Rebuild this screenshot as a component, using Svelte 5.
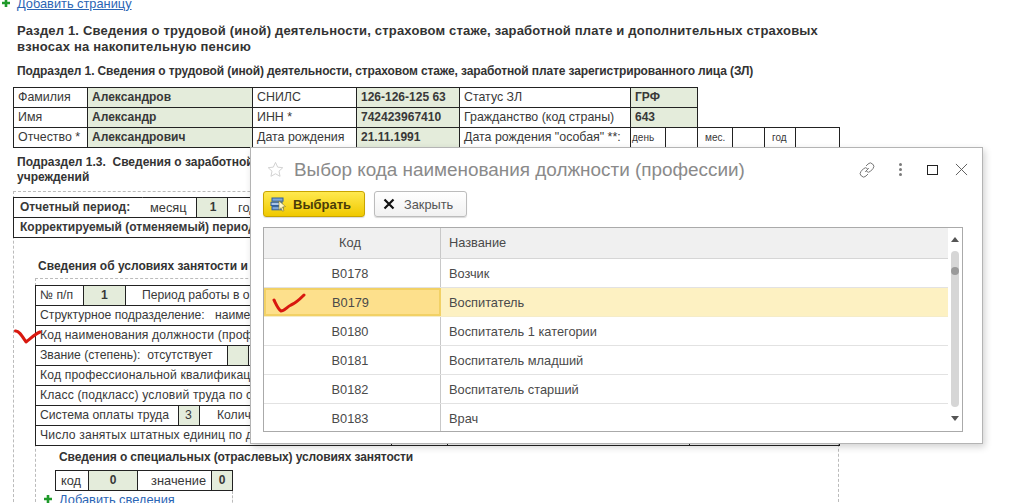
<script>
  const rows = [
    { code: 'В0178', name: 'Возчик' },
    { code: 'В0179', name: 'Воспитатель', sel: true },
    { code: 'В0180', name: 'Воспитатель 1 категории' },
    { code: 'В0181', name: 'Воспитатель младший' },
    { code: 'В0182', name: 'Воспитатель старший' },
    { code: 'В0183', name: 'Врач', last: true }
  ];
</script>

<div class="page">
  <div class="doc">
    <div class="add top"><svg class="plus" viewBox="0 0 8 8"><path d="M4 0v8M0 4h8" /></svg><span class="link">Добавить страницу</span></div>
    <h1>Раздел 1. Сведения о трудовой (иной) деятельности, страховом стаже, заработной плате и дополнительных страховых<br />взносах на накопительную пенсию</h1>
    <h2 class="sub">Подраздел 1. Сведения о трудовой (иной) деятельности, страховом стаже, заработной плате зарегистрированного лица (ЗЛ)</h2>

    <div class="t1">
      <div class="c first">Фамилия</div><div class="c g b">Александров</div><div class="c">СНИЛС</div><div class="c g b">126-126-125 63</div><div class="c">Статус ЗЛ</div><div class="c g b s2">ГРФ</div>
      <div class="c first">Имя</div><div class="c g b">Александр</div><div class="c">ИНН *</div><div class="c g b">742423967410</div><div class="c">Гражданство (код страны)</div><div class="c g b s2">643</div>
      <div class="c first">Отчество *</div><div class="c g b">Александрович</div><div class="c">Дата рождения</div><div class="c g b">21.11.1991</div><div class="c">Дата рождения "особая" **:</div><div class="c sm pd1">день</div><div class="c"></div><div class="c sm pd7">мес.</div><div class="c"></div><div class="c sm pd7">год</div><div class="c"></div>
    </div>

    <h2 class="sub13">Подраздел 1.3.&nbsp; Сведения о заработной<br />учреждений</h2>

    <section class="sheet">
      <div class="t2">
        <div class="row"><div class="c b w-a">Отчетный период:</div><div class="c mes">месяц</div><div class="c g b ctr w-m">1</div><div class="c grow god">год</div></div>
        <div class="row"><div class="c b grow">Корректируемый (отменяемый) период:</div></div>
      </div>

      <h3 class="cond">Сведения об условиях занятости и з</h3>

      <div class="inner">
        <div class="t3">
          <div class="row"><div class="c w48">№ п/п</div><div class="c g b ctr w42">1</div><div class="c grow per">Период работы в о</div></div>
          <div class="row"><div class="c grow">Структурное подразделение:&nbsp;&nbsp;&nbsp;наиме</div></div>
          <div class="row"><div class="c grow wide">Код наименования должности (проф</div></div>
          <div class="row"><div class="c w192">Звание (степень): &nbsp;отсутствует</div><div class="c g w22"></div><div class="c grow"></div></div>
          <div class="row"><div class="c grow wide">Код профессиональной квалификац</div></div>
          <div class="row"><div class="c grow wide">Класс (подкласс) условий труда по ст</div></div>
          <div class="row"><div class="c w143">Система оплаты труда</div><div class="c g ctr w21">3</div><div class="c grow kol">Колич</div></div>
          <div class="row"><div class="c w356 wide">Число занятых штатных единиц по до</div><div class="c w56"></div><div class="c w242"></div><div class="c grow"></div></div>
        </div>

        <h3 class="spec">Сведения о специальных (отраслевых) условиях занятости</h3>
        <div class="t4">
          <div class="c kod">код</div><div class="c g b ctr v0">0</div><div class="c zn">значение</div><div class="c g b ctr v1">0</div>
        </div>
        <div class="add low"><svg class="plus" viewBox="0 0 8 8"><path d="M4 0v8M0 4h8" /></svg><span class="link">Добавить сведения</span></div>
      </div>
    </section>
  </div>

  <svg class="mark mark-left" viewBox="0 0 28 15"><path d="M1.500 2 C5 1.500 8 7 12 13 C17 9 21 5 26 3" /></svg>

  <div class="dialog">
    <header class="head">
      <svg class="star" viewBox="0 0 18 18"><path d="M9 1.500l2.300 5 5.400.6-4 3.700 1.100 5.400L9 13.500l-4.800 2.700 1.100-5.400-4-3.700 5.400-.6z" /></svg>
      <div class="title">Выбор кода наименования должности (профессии)</div>
      <svg class="hico link-ico" viewBox="0 0 18 18"><path d="M7.200 10.800l3.600-3.600M8 5l2-2a3.200 3.200 0 0 1 4.600 0a3.200 3.200 0 0 1 .4 4.600l-2.400 2.600a3 3 0 0 1-4.200.1M10 13l-2 2a3.200 3.200 0 0 1-4.600 0A3.200 3.200 0 0 1 3 10.400l2.400-2.600a3 3 0 0 1 4.200-.1" /></svg>
      <div class="dots"><i></i><i></i><i></i></div>
      <div class="max"></div>
      <svg class="close" viewBox="0 0 14 14"><path d="M1 1l12 12M13 1L1 13" /></svg>
    </header>

    <div class="btns">
      <button class="btn primary">
        <svg class="pick" viewBox="0 0 18 18">
          <rect x="2" y="3" width="11" height="3.200" fill="#7fa6d6" stroke="#2f5f9f" />
          <rect x="1" y="7.300" width="11" height="3.200" fill="#a9c4e6" stroke="#2f5f9f" />
          <rect x="2" y="11.600" width="11" height="3.200" fill="#7fa6d6" stroke="#2f5f9f" />
          <path d="M9 6l6.500 5.500-3 .5 1.500 3.500-1.500.7-1.500-3.500-2 2z" fill="#fff8c8" stroke="#8a7a20" stroke-width=".6" />
        </svg>
        Выбрать
      </button>
      <button class="btn plain">
        <svg class="x" viewBox="0 0 12 12"><path d="M1.500 1.500l9 9M10.500 1.500l-9 9" /></svg>
        Закрыть
      </button>
    </div>

    <div class="grid">
      <div class="gmain">
        <div class="ghead"><div class="gc1">Код</div><div class="gc2">Название</div></div>
        {#each rows as r}
          <div class="grow-r" class:sel={r.sel} class:last={r.last}>
            <div class="gc1">{r.code}</div>
            <div class="gc2">{r.name}</div>
          </div>
        {/each}
      </div>
      <div class="sbar">
        <span class="arrow up"></span>
        <div class="track"><div class="thumb"></div></div>
        <span class="arrow down"></span>
      </div>
    </div>
    <svg class="mark mark-sel" viewBox="0 0 34 21"><path d="M2 7 C4 11 6 16 9 18 C12 18 15 14 19 12 C24 10 27 7 32 2" /></svg>
  </div>
</div>

<style>
  :global(html), :global(body) { margin: 0; overflow: hidden; background: #fff; }
  * { box-sizing: border-box; }
  .page {
    position: relative;
    width: 1017px;
    height: 503px;
    overflow: hidden;
    background: #fff;
    font-family: "Liberation Sans", Arial, sans-serif;
    font-size: 12px;
    color: #383838;
  }
  .doc { margin-top: -5px; }
  .add { display: flex; align-items: center; height: 16px; font-size: 12.800px; }
  .top { padding-left: 2px; }
  .plus { width: 8px; height: 8px; margin-right: 7px; flex: none; }
  .plus path { stroke: #1f9a2a; stroke-width: 2.600; fill: none; }
  .link { color: #2b65b5; text-decoration: underline; }
  h1, h2, h3 { margin: 0; font-weight: 700; color: #333; }
  h1 { margin: 12px 0 0 17px; font-size: 13px; line-height: 16px; letter-spacing: .18px; white-space: nowrap; }
  .sub { margin: 8px 0 0 17px; font-size: 12px; line-height: 16px; letter-spacing: -.12px; white-space: nowrap; }

  .c {
    border: 1px solid #222;
    margin: 0 -1px -1px 0;
    padding: 0 4px;
    height: 21px;
    line-height: 19px;
    white-space: nowrap;
    overflow: hidden;
    min-width: 0;
  }
  .g { background: #e4ecdb; }
  .b { font-weight: 700; }
  .ctr { text-align: center; }
  .sm { font-size: 10px; }
  .pd1 { padding-left: 1px; }
  .pd7 { padding-left: 7px; }
  .grow { flex: 1; }
  .row { display: flex; height: 20px; }

  .t1 {
    margin: 8px 0 0 13px;
    display: grid;
    width: 826px;
    grid-template-columns: 74px 165px 104px 103px 171px 35px 32px 35px 32px 31px 44px;
    grid-auto-rows: 20px;
    font-size: 12.400px;
  }
  .t1 .b { font-size: 12px; }
  .first { grid-column: 1; }
  .s2 { grid-column: span 2; }

  .sub13 { margin: 8px 0 0 17px; font-size: 12px; line-height: 15px; white-space: nowrap; }

  .sheet {
    margin: 6px 0 0 13px;
    width: 826px;
    border-top: 1px dashed #bbb;
    border-left: 1px dashed #bbb;
    padding-top: 5px;
  }
  .t2 { margin-left: -1px; width: 827px; }
  .t2 .c { padding-left: 6px; }
  .w-a { width: 130px; border-right-color: transparent; }
  .mes { width: 55px; padding-left: 7px !important; border-left-color: transparent; font-size: 12.800px; }
  .w-m { width: 32px; }
  .god { padding-left: 10px !important; font-size: 12.800px; }
  .cond { margin: 21px 0 0 24px; font-size: 12px; line-height: 16px; white-space: nowrap; }

  .inner {
    margin: 4px 0 0 21px;
    border-top: 1px dashed #bbb;
    border-left: 1px dashed #bbb;
    border-right: 1px dashed #bbb;
    padding-top: 6px;
  }
  .t3 { margin-left: -1px; margin-right: -1px; }
  .t3 .c { padding-left: 4px; font-size: 12.200px; }
  .t3 .c.wide { letter-spacing: .14px; }
  .w48 { width: 49px; }
  .w42 { width: 43px; }
  .per { padding-left: 16px !important; }
  .w192 { width: 193px; }
  .w22 { width: 22px; }
  .w143 { width: 144px; }
  .w21 { width: 22px; padding-left: 3px !important; }
  .kol { padding-left: 17px !important; }
  .w356 { width: 357px; }
  .w56 { width: 57px; }
  .w242 { width: 243px; }

  .spec { margin: 4px 0 0 23px; font-size: 12px; line-height: 16px; letter-spacing: -.1px; white-space: nowrap; }
  .t4 { display: flex; margin: 5px 0 0 19px; height: 20px; font-size: 12.800px; }
  .t4 .b { font-size: 12px; }
  .kod { width: 34px; padding-left: 5px; }
  .v0 { width: 50px; }
  .zn { width: 75px; text-align: right; padding-right: 5px; }
  .v1 { width: 22px; padding: 0; }
  .low { padding-left: 8px; margin-top: 1px; width: 197px; border-right: 1px dashed #bbb; }
  .low .plus { margin-right: 7px; }

  .dialog {
    position: absolute;
    left: 250px;
    top: 147px;
    width: 733px;
    height: 297px;
    background: #fff;
    border: 1px solid #b4b4b4;
    box-shadow: 2px 3px 7px rgba(0, 0, 0, .18);
    padding: 0 19px 0 12px;
    display: flex;
    flex-direction: column;
  }
  .head { display: flex; align-items: center; height: 43px; flex: none; position: relative; }
  .star { width: 17px; height: 17px; margin-left: 4px; }
  .star path { fill: none; stroke: #cfcfcf; stroke-width: 1; }
  .title { margin-left: 10px; font-size: 18.900px; color: #8a8a8a; flex: 1; white-space: nowrap; }
  .hico { width: 18px; height: 18px; margin-right: 4px; }
  .hico path { fill: none; stroke: #777; stroke-width: 1; }
  .dots { display: flex; flex-direction: column; gap: 2px; margin: 0 2px 0 19px; width: 4px; }
  .dots i { width: 3px; height: 3px; background: #7a7a7a; border-radius: 50%; display: block; }
  .max { width: 11px; height: 10px; border: 1px solid #222; margin-left: 22px; }
  .close { width: 13px; height: 13px; margin: 0 -5px 0 17px; }
  .close path { stroke: #555; stroke-width: 1; fill: none; }

  .btns { display: flex; gap: 9px; margin-top: 0; flex: none; }
  .btn {
    display: flex;
    align-items: center;
    height: 26px;
    padding: 0;
    border-radius: 3px;
    font-family: inherit;
    font-size: 12.800px;
    box-shadow: 0 1px 1px rgba(0, 0, 0, .15);
  }
  .primary {
    width: 102px;
    background: linear-gradient(#ffe94f, #f0c900);
    border: 1px solid #c8a400;
    font-weight: 700;
    font-size: 13px;
    color: #4a3c08;
    padding-left: 6px;
    gap: 5px;
  }
  .pick { width: 18px; height: 18px; }
  .plain {
    width: 93px;
    background: linear-gradient(#fff, #f1f1f1);
    border: 1px solid #bcbcbc;
    color: #555;
    padding-left: 8px;
    gap: 9px;
  }
  .x { width: 12px; height: 12px; }
  .x path { stroke: #111; stroke-width: 2.200; fill: none; }

  .grid {
    margin-top: 10px;
    height: 205px;
    border: 1px solid #aaa;
    display: flex;
    flex: none;
    position: relative;
    color: #4a4a4a;
    font-size: 12.800px;
  }
  .gmain { width: 684px; flex: none; }
  .ghead {
    display: flex;
    height: 31px;
    background: #f0f0f0;
    border-bottom: 1px solid #d6d6d6;
    line-height: 29px;
  }
  .grow-r {
    display: flex;
    height: 29px;
    line-height: 29px;
    border-bottom: 1px solid #e2e2e2;
  }
  .grow-r.last { border-bottom: 0; height: 27px; }
  .gc1 { width: 177px; text-align: center; border-right: 1px solid #c8c8c8; flex: none; padding-right: 4px; }
  .gc2 { flex: 1; padding-left: 8px; }
  .sel { background: #fdf1c2; border-bottom-color: #f5ecc8; }
  .sel .gc1 { background: #fde08c; border: 2px solid #f2d165; line-height: 25px; }
  .sbar { flex: 1; position: relative; display: flex; flex-direction: column; align-items: center; }
  .arrow { width: 0; height: 0; border-left: 4px solid transparent; border-right: 4px solid transparent; position: absolute; left: 3px; }
  .up { border-bottom: 5px solid #555; top: 9px; }
  .down { border-top: 5px solid #555; top: 188px; }
  .track { width: 8px; height: 156px; margin: 23px 0 0 -1px; background: #d6d6d6; border-radius: 4px; position: relative; }
  .thumb { position: absolute; top: 16px; left: 0; width: 8px; height: 8px; border-radius: 50%; background: #9a9a9a; }

  .mark { position: absolute; fill: none; }
  .mark path { fill: none; stroke: #d8180f; stroke-width: 3; stroke-linecap: round; stroke-linejoin: round; }
  .mark-left { left: 14px; top: 329px; width: 28px; height: 15px; }
  .mark-sel { left: 21px; top: 145px; width: 34px; height: 21px; }
</style>
